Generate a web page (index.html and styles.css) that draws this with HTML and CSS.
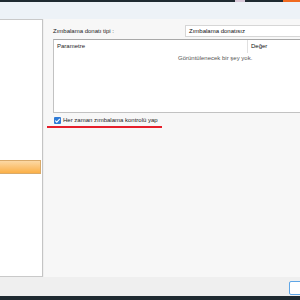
FILE: index.html
```html
<!DOCTYPE html>
<html lang="tr">
<head>
    <meta charset="UTF-8" />
    <title>Zımbalama</title>
    <link rel="stylesheet" href="styles.css">
</head>
<body>

    <div class="topbar">
        <span class="tb-dot tb-pink"></span>
        <span class="tb-dot tb-orange"></span>
    </div>
    <div class="band"></div>

    <div class="main">
        <div class="side">
            <div class="side-btn"></div>
        </div>

        <div class="content">
            <div class="type-row">
                <span class="type-label">Zımbalama donatı tipi :</span>
                <div class="combo">Zımbalama donatısız</div>
            </div>

            <div class="grid">
                <div class="grid-head">
                    <div class="col-param">Parametre</div>
                    <div class="col-value">Değer</div>
                </div>
                <div class="grid-empty">Görüntülenecek bir şey yok.</div>
            </div>

            <div class="check-row">
                <span class="check-box">
                    <svg width="7" height="7" viewBox="0 0 7 7"><path d="M1.2 3.6 L2.8 5.1 L5.8 1.8" fill="none" stroke="#fff" stroke-width="1.1"/></svg>
                </span>
                <span class="check-label">Her zaman zımbalama kontrolü yap</span>
            </div>
            <div class="red-mark"></div>
        </div>
    </div>

    <div class="footer">
        <div class="foot-btn"></div>
    </div>
    <div class="taskbar"></div>

</body>
</html>
```

FILE: styles.css
```css
body {
    margin: 0;
    width: 300px;
    height: 300px;
    overflow: hidden;
    font-family: "Liberation Sans", Arial, sans-serif;
    font-size: 6px;
    color: #1c1c1c;
    background-color: #efefef;
}
.topbar {
    height: 2px;
    background-color: #1f2a31;
    display: flex;
    justify-content: flex-end;
}
.tb-dot {
    height: 2px;
}
.tb-pink {
    width: 10px;
    background-color: #d8c8d8;
    margin-right: 38px;
}
.tb-orange {
    width: 17px;
    background-color: #f06a20;
}
.band {
    height: 17px;
    background-color: #edf2f7;
}
.main {
    display: flex;
    height: 258px;
}
.side {
    width: 43px;
    background-color: #fff;
    border-top: 1px solid #c9c9c9;
    border-right: 1px solid #c4c4c4;
    border-bottom: 1px solid #c9c9c9;
    box-sizing: border-box;
    padding-top: 140px;
}
.side-btn {
    width: 41px;
    height: 14px;
    box-sizing: border-box;
    border: 1px solid #d9aa6a;
    border-left: none;
    background: linear-gradient(#fcd8a4, #fbc477 50%, #fbb047);
}
.content {
    flex: 1;
    background-color: #f7f7f7;
    padding: 6px 0 0 9px;
    margin-left: 1px;
    overflow: hidden;
}
.type-row {
    display: flex;
    align-items: center;
    height: 12px;
}
.type-label {
    width: 132px;
}
.combo {
    flex: 1;
    height: 12px;
    box-sizing: border-box;
    margin-right: -4px;
    background-color: #fff;
    border: 1px solid #d6d6d6;
    padding-left: 3px;
    line-height: 10px;
    color: #111;
}
.grid {
    margin-top: 2px;
    height: 74px;
    margin-right: -4px;
    box-sizing: border-box;
    background-color: #fff;
    border: 1px solid #c2c2c2;
    border-top-color: #a9a9a9;
}
.grid-head {
    display: flex;
    height: 13px;
    line-height: 13px;
}
.col-param {
    width: 190px;
    padding-left: 3px;
    border-right: 1px solid #e0e0e0;
}
.col-value {
    padding-left: 3px;
    color: #111;
}
.grid-empty {
    margin-top: 2px;
    padding-left: 124px;
    color: #555;
}
.check-row {
    display: flex;
    align-items: center;
    margin-top: 3px;
    height: 8px;
}
.check-box {
    width: 7px;
    height: 7px;
    background-color: #2f7bd6;
    border-radius: 1px;
    margin-left: 1px;
    margin-right: 2px;
    display: flex;
}
.check-label {
    color: #1c1c1c;
}
.red-mark {
    width: 115px;
    height: 2px;
    margin-top: 2px;
    margin-left: -6px;
    background-color: #e61e2a;
}
.footer {
    height: 19px;
    background-color: #efefef;
    display: flex;
    justify-content: flex-end;
    align-items: flex-end;
}
.foot-btn {
    width: 12px;
    height: 12px;
    margin-bottom: 1px;
    margin-right: -3px;
    border: 1px solid #5fa6e6;
    border-radius: 2px;
    background-color: #fff;
}
.taskbar {
    height: 4px;
    background-color: #1f2a31;
}
```
